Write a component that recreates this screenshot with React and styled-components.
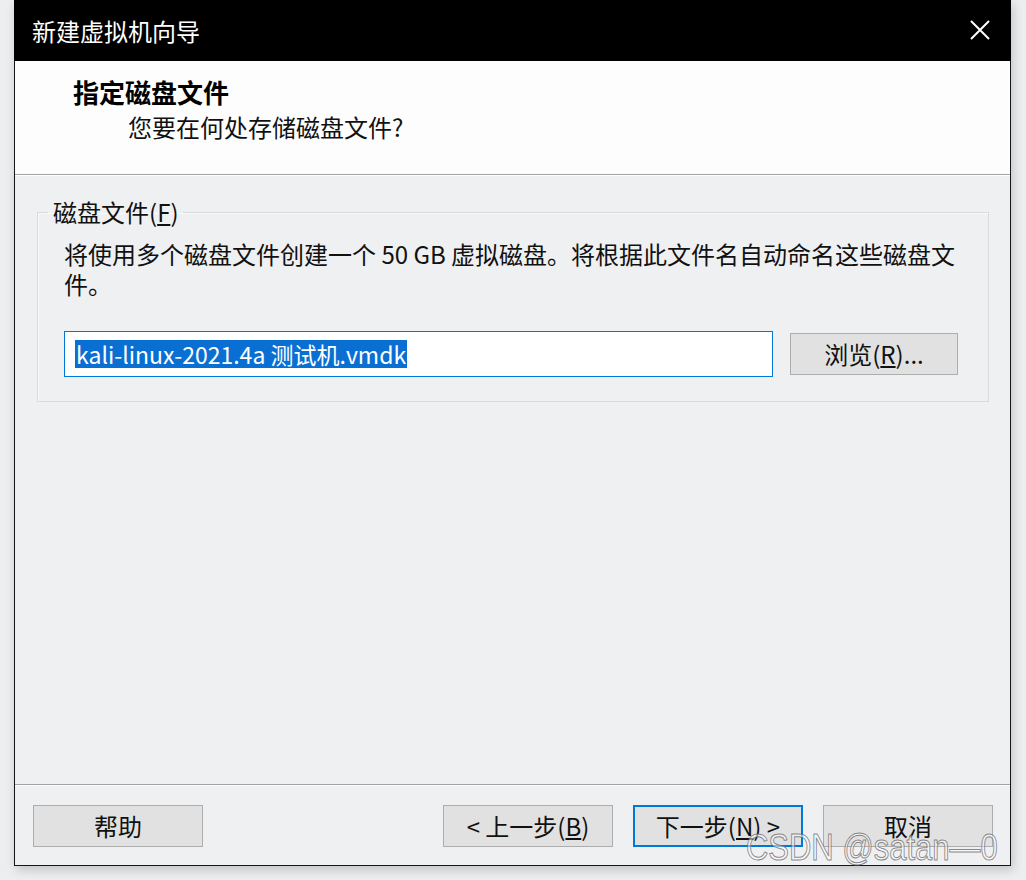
import React from 'react';
import styled, { createGlobalStyle } from 'styled-components';

const GlobalStyle = createGlobalStyle`
  html, body {
    margin: 0;
    padding: 0;
    background: #eceef0;
  }
  body {
    font-family: "Noto Sans CJK SC", "Microsoft YaHei", sans-serif;
    color: #000;
  }
`;

const Page = styled.div`
  width: 1026px;
  height: 880px;
  overflow: hidden;
`;

const Window = styled.div`
  position: relative;
  margin-left: 14px;
  width: 997px;
  height: 866px;
  box-sizing: border-box;
  border: 1px solid #15151c;
  border-top: none;
  background: #eff0f2;
  display: flex;
  flex-direction: column;
  box-shadow: 2px 4px 10px rgba(0, 0, 0, 0.18);
`;

const TitleBar = styled.div`
  height: 61px;
  margin: 0 -1px;
  background: #000;
  color: #fff;
  display: flex;
  align-items: center;
  justify-content: space-between;
  padding: 0 20px 0 18px;
  font-size: 24px;
  line-height: 30px;
  flex-shrink: 0;
`;

const CloseButton = styled.div`
  width: 22px;
  height: 22px;
  display: flex;
  align-items: center;
  justify-content: center;
  margin-top: -2px;
`;

const Header = styled.div`
  height: 114px;
  box-sizing: border-box;
  background: #fdfdfe;
  border-bottom: 1px solid #a3a3a6;
  box-shadow: 0 1px 0 #fff;
  padding: 16px 0 0 58px;
  flex-shrink: 0;
`;

const HeaderTitle = styled.div`
  font-size: 26px;
  font-weight: 700;
  line-height: 30px;
`;

const HeaderSub = styled.div`
  margin: 5px 0 0 55px;
  font-size: 24px;
  line-height: 30px;
  color: #111;
`;

const Content = styled.div`
  flex: 1;
  padding: 22px 21px 0 22px;
`;

const GroupBox = styled.fieldset`
  margin: 0;
  border: 1px solid #d9dadd;
  box-shadow: inset 1px 1px 0 #fafafa;
  padding: 0 29px 24px 26px;
  min-width: 0;
`;

const Legend = styled.legend`
  margin-left: -16px;
  padding: 0 4px 0 5px;
  font-size: 24px;
  line-height: 30px;
  color: #111;
`;

const Description = styled.p`
  margin: 12px 0 0;
  font-size: 24px;
  line-height: 30px;
  color: #111;
`;

const FieldRow = styled.div`
  margin-top: 32px;
  display: flex;
  align-items: center;
  gap: 17px;
`;

const Field = styled.div`
  width: 709px;
  height: 46px;
  box-sizing: border-box;
  border: 1px solid #0078d7;
  background: #fff;
  padding: 0 10px;
  display: flex;
  align-items: center;
`;

const Selected = styled.span`
  background: #0a6fd3;
  color: #fff;
  font-size: 23px;
  line-height: 28px;
  padding: 0 1px;
`;

const Button = styled.div`
  width: ${(p) => p.$w || 170}px;
  height: 42px;
  box-sizing: border-box;
  background: #e1e1e1;
  border: ${(p) => (p.$default ? '2px solid #0078d7' : '1px solid #adadad')};
  display: flex;
  align-items: center;
  justify-content: center;
  font-size: 24px;
  line-height: 30px;
  color: #111;
  flex-shrink: 0;
`;

const Footer = styled.div`
  height: 81px;
  box-sizing: border-box;
  border-top: 1px solid #a3a3a6;
  box-shadow: inset 0 1px 0 #fbfbfb;
  padding: 20px 17px 0 18px;
  display: flex;
  align-items: flex-start;
  gap: 20px;
  flex-shrink: 0;
`;

const Spacer = styled.div`
  flex: 1;
`;

const Watermark = styled.div`
  position: absolute;
  right: 12px;
  bottom: -3px;
  font-family: "Liberation Sans", Arial, sans-serif;
  font-size: 36px;
  line-height: 40px;
  color: rgba(255, 255, 255, 0.55);
  -webkit-text-stroke: 1px rgba(100, 100, 104, 0.75);
  transform: scaleX(0.86);
  transform-origin: right center;
  pointer-events: none;
  white-space: nowrap;
`;

const Close = () => (
  <svg width="22" height="22" viewBox="0 0 22 22">
    <path d="M2 2 L20 20 M20 2 L2 20" stroke="#fff" strokeWidth="2" fill="none" />
  </svg>
);

export default function App() {
  return (
    <Page>
      <GlobalStyle />
      <Window>
        <TitleBar>
          <span>新建虚拟机向导</span>
          <CloseButton>
            <Close />
          </CloseButton>
        </TitleBar>
        <Header>
          <HeaderTitle>指定磁盘文件</HeaderTitle>
          <HeaderSub>您要在何处存储磁盘文件?</HeaderSub>
        </Header>
        <Content>
          <GroupBox>
            <Legend>
              磁盘文件(<u>F</u>)
            </Legend>
            <Description>
              将使用多个磁盘文件创建一个 50 GB 虚拟磁盘。将根据此文件名自动命名这些磁盘文件。
            </Description>
            <FieldRow>
              <Field>
                <Selected>kali-linux-2021.4a 测试机.vmdk</Selected>
              </Field>
              <Button $w={168}>
                浏览(<u>R</u>)...
              </Button>
            </FieldRow>
          </GroupBox>
        </Content>
        <Footer>
          <Button>帮助</Button>
          <Spacer />
          <Button>
            &lt; 上一步(<u>B</u>)
          </Button>
          <Button $default>
            下一步(<u>N</u>) &gt;
          </Button>
          <Button>取消</Button>
        </Footer>
        <Watermark>CSDN @satan—0</Watermark>
      </Window>
    </Page>
  );
}
